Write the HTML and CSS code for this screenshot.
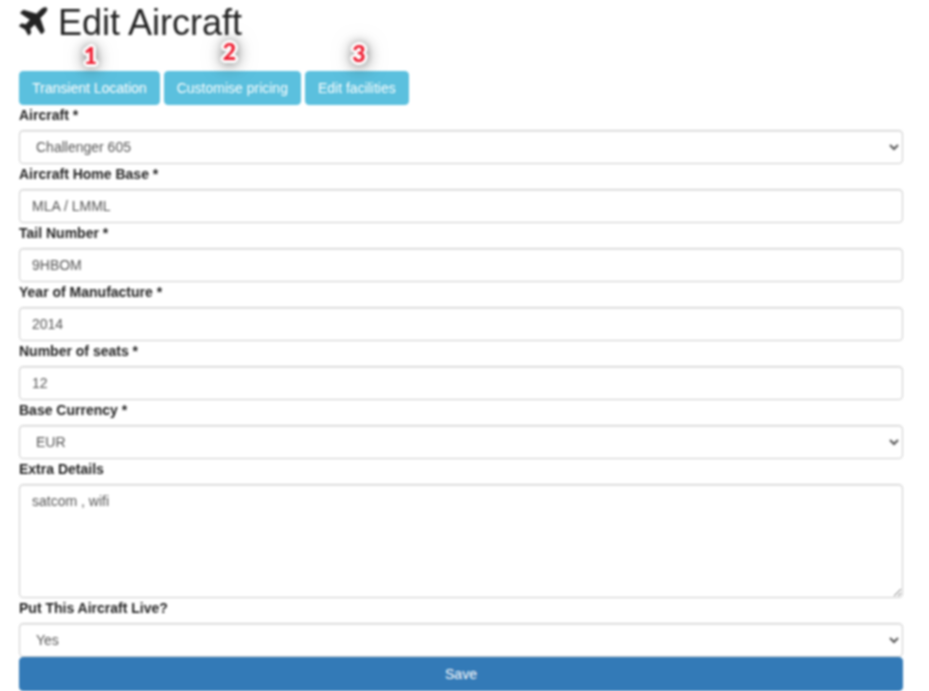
FILE: index.html
```html
<!DOCTYPE html>
<html lang="en">
<head>
<meta charset="utf-8">
<title>Edit Aircraft</title>
<link rel="stylesheet" href="styles.css">
</head>
<body>
<main class="page">
  <h1 class="title">
    <svg class="plane" viewBox="0 0 30 30" aria-hidden="true"><path d="M28.600 1.100c-1.600-.9-4.400.1-6.300 2L18 7.400 5.300 3.600c-.6-.2-1.100 0-1.500.4L1.600 6.200l10.200 6.900-4.700 5.200-4.500-.9-2.200 2.200 6.100 3.400 3.400 6.100 2.200-2.200-.9-4.500 5.200-4.700 6.900 10.200 2.200-2.200c.4-.4.600-.9.400-1.500L21.500 11.500l4.300-4.300c1.900-1.900 3.700-4.500 2.800-6.100z"/></svg>
    Edit Aircraft
  </h1>
  <div class="actions">
    <a class="btn-info">Transient Location<span class="mark mark-1">1</span></a>
    <a class="btn-info">Customise pricing<span class="mark mark-2">2</span></a>
    <a class="btn-info">Edit facilities<span class="mark mark-3">3</span></a>
  </div>
  <form class="form">
    <label class="label" for="aircraft">Aircraft *</label>
    <select class="control" id="aircraft"><option>Challenger 605</option></select>
    <label class="label" for="base">Aircraft Home Base *</label>
    <input class="control" id="base" value="MLA / LMML">
    <label class="label" for="tail">Tail Number *</label>
    <input class="control" id="tail" value="9HBOM">
    <label class="label" for="year">Year of Manufacture *</label>
    <input class="control" id="year" value="2014">
    <label class="label" for="seats">Number of seats *</label>
    <input class="control" id="seats" value="12">
    <label class="label" for="currency">Base Currency *</label>
    <select class="control" id="currency"><option>EUR</option></select>
    <label class="label" for="extra">Extra Details</label>
    <textarea class="control area" id="extra">satcom , wifi</textarea>
    <label class="label" for="live">Put This Aircraft Live?</label>
    <select class="control" id="live"><option>Yes</option></select>
    <button class="save" type="button">Save</button>
  </form>
</main>
</body>
</html>
```
FILE: styles.css
```css
* { box-sizing: border-box; }
html, body { margin: 0; height: 691px; overflow: hidden; background: #fff; }
body { font-family: "Liberation Sans", Arial, sans-serif; font-size: 14px; line-height: 20px; color: #333; }
.page { width: 884px; margin-left: 19px; filter: blur(0.8px); }
.title { display: flex; align-items: center; gap: 10px; height: 71px; margin: 0; padding-bottom: 25px; font-size: 36px; font-weight: 400; line-height: 40px; color: #222; }
.plane { width: 29px; height: 29px; margin-top: -4px; fill: #222; stroke: #222; stroke-width: 1; stroke-linejoin: round; flex: none; }
.actions { display: flex; gap: 4px; }
.btn-info { position: relative; display: block; height: 34px; padding: 6px 12px; color: #fff; background: #5bc0de; border: 1px solid #5bc0de; border-radius: 4px; white-space: nowrap; }
.mark { position: absolute; font-family: Lato, sans-serif; font-size: 23px; font-weight: 900; line-height: 28px; text-align: center; color: #ee1c30;
  text-shadow: 3px 0 0 #fff, -3px 0 0 #fff, 0 3px 0 #fff, 0 -3px 0 #fff, 2px 2px 0 #fff, -2px 2px 0 #fff, 2px -2px 0 #fff, -2px -2px 0 #fff, 0 0 10px rgba(0,0,0,.9), 0 2px 16px rgba(0,0,0,.9), 0 2px 22px rgba(0,0,0,.6); }
.mark-1 { top: -31px; left: 2px; right: 0; }
.mark-2 { top: -35px; left: 0; right: 6px; }
.mark-3 { top: -33px; left: 4px; right: 0; }
.form { display: flex; flex-direction: column; }
.label { display: block; height: 20px; margin: 0 0 5px; font-weight: 700; color: #222; }
.control { display: block; width: 100%; height: 34px; padding: 6px 12px; font: inherit; color: #555; background: #fff; border: 1px solid #ccc; border-radius: 4px; box-shadow: inset 0 1px 1px rgba(0,0,0,.075); }
.area { height: 114px; }
.save { display: block; width: 100%; height: 34px; padding: 6px 12px; font: inherit; color: #fff; background: #337ab7; border: 1px solid #337ab7; border-radius: 4px; }
```
